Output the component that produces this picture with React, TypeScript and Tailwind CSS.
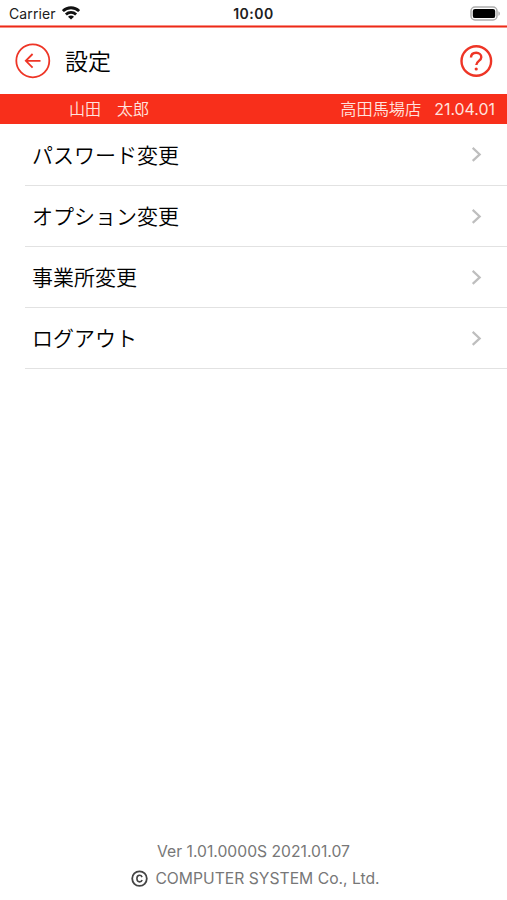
const rows = ['パスワード変更', 'オプション変更', '事業所変更', 'ログアウト'];

function StatusBar() {
  return (
    <div className="grid h-[25px] grid-cols-[1fr_auto_1fr] items-center pt-[3px] text-[#202020]">
      <div className="flex items-center gap-[6px] pl-[9px]">
        <span className="text-[14px] leading-none tracking-[0.1px]">Carrier</span>
        <svg width="18" height="14" viewBox="0 0 18 14" fill="none" stroke="#111" strokeWidth="2.8" className="-mt-[2px]">
          <path d="M0.9 5.1C5.4 0.6 12.6 0.6 17.1 5.1" />
          <path d="M3.9 8.4C6.8 5.6 11.2 5.6 14.1 8.4" />
          <path d="M9 13.6L6 10.7C7.7 9.2 10.3 9.2 12 10.7Z" fill="#111" stroke="none" />
        </svg>
      </div>
      <span className="text-[14px] leading-none font-semibold tracking-[0.5px]">10:00</span>
      <div className="flex justify-end pr-[6px]">
        <svg width="31" height="15" viewBox="0 0 31 15" className="-mt-[2px]">
          <rect x="1" y="1" width="26" height="13" rx="4" fill="#fff" stroke="#adadad" strokeWidth="1.5" />
          <rect x="2.8" y="2.9" width="22.4" height="9.2" rx="2.2" fill="#000" />
          <path d="M28.4 5.2C30.4 6 30.4 9 28.4 9.8Z" fill="#adadad" />
        </svg>
      </div>
    </div>
  );
}

function Header() {
  return (
    <header className="flex h-[66px] items-center pr-[14px] pl-[15px]">
      <svg width="36" height="36" viewBox="0 0 36 36" fill="none" stroke="#ee3526" strokeWidth="1.8">
        <circle cx="17.8" cy="17.8" r="16.5" />
        <path d="M25.5 17.8H11M17.6 11L10.8 17.8L17.6 24.6" />
      </svg>
      <h1 className="ml-[14px] flex-1 pt-[2px] text-[23px] leading-none font-[350] text-black">設定</h1>
      <svg width="34" height="34" viewBox="0 0 34 34" fill="none" stroke="#ee3526" strokeWidth="2.4">
        <circle cx="17.3" cy="17" r="14.8" />
        <path d="M12 13.6C12 10.5 14.2 8.8 17.2 8.8C20.2 8.8 22.3 10.7 22.3 13.2C22.3 16.8 17.3 17 17.3 21" />
        <circle cx="17.2" cy="25" r="1.6" fill="#ee3526" stroke="none" />
      </svg>
    </header>
  );
}

export default function App() {
  return (
    <div className="flex h-[900px] w-[507px] flex-col overflow-hidden bg-white font-['Inter','Noto_Sans_CJK_JP',sans-serif]">
      <StatusBar />
      <div className="h-[3px] border-y border-[#f78e83] bg-[#ec2a18]" />
      <Header />
      <div className="flex h-[30px] items-center justify-between bg-[#f82f1b] pr-[12px] pl-[69px] text-[16px] leading-none font-[350] whitespace-pre text-[#ffe3df]">
        <span>山田　太郎</span>
        <div className="flex items-center gap-[13px] pt-px">
          <span className="text-[16.2px]">高田馬場店</span>
          <span className="text-[15.9px] font-normal">21.04.01</span>
        </div>
      </div>
      <ul className="pt-[0.4px]">
        {rows.map((label) => (
          <li key={label} className="ml-[25px] flex h-[61.2px] items-center justify-between border-b border-[#e2e2e2] pr-[25px] pl-[7px]">
            <span className="pt-[1.5px] text-[21px] leading-none font-[350] text-black">{label}</span>
            <svg width="11" height="16" viewBox="0 0 11 16" fill="none" stroke="#bebebe" strokeWidth="2.2">
              <path d="M1.7 1.9L8.7 8.4L1.7 14.9" />
            </svg>
          </li>
        ))}
      </ul>
      <footer className="mt-auto flex flex-col items-center pb-[12px] text-[15.7px] leading-[18px] text-[#777]">
        <p>Ver 1.01.0000S 2021.01.07</p>
        <div className="mt-[9px] flex items-center gap-[7px] pl-[4px]">
          <svg width="17" height="18" viewBox="0 0 17 18" fill="none" stroke="#444" strokeWidth="1.8">
            <circle cx="8.5" cy="8.6" r="7.3" />
            <path d="M11.1 7.1C10.5 5.7 9.8 5.3 8.6 5.3C6.9 5.3 5.9 6.6 5.9 8.6S6.9 11.9 8.6 11.9C9.8 11.9 10.7 11.4 11.1 10.1" strokeWidth="1.6" />
          </svg>
          <span>COMPUTER SYSTEM Co., Ltd.</span>
        </div>
      </footer>
    </div>
  );
}
